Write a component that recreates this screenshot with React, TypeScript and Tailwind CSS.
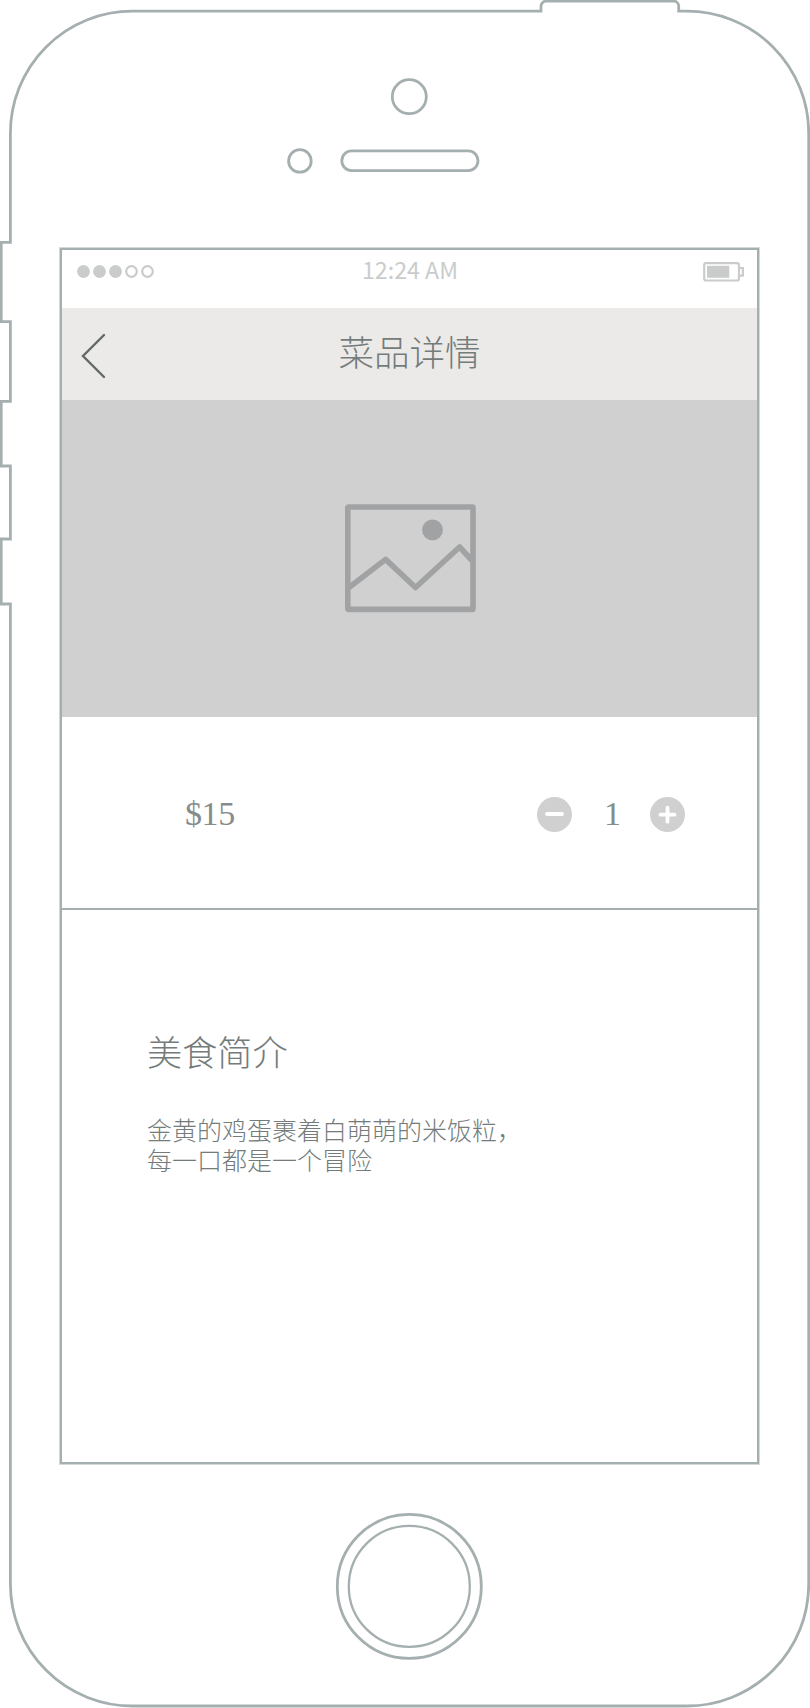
import type { ReactNode } from "react";

const OUTLINE =
  "M541 12.4V6.2a5 5 0 0 1 5-5H673.7a5 5 0 0 1 5 5V11.2H686.7A122 122 0 0 1 808.7 133.2V1584A122 122 0 0 1 686.7 1706H132.5A122 122 0 0 1 10.4 1584V604H1.2V539H10.4V466H1.2V401.3H10.4V321.7H1.2V242.4H10.4V133.2A122 122 0 0 1 132.4 11.2H542.2";

function DeviceOutline() {
  return (
    <svg
      className="pointer-events-none absolute inset-0"
      width="810"
      height="1708"
      viewBox="0 0 810 1708"
      fill="none"
      stroke="#a5afb0"
      strokeWidth="2.8"
      aria-hidden="true"
    >
      <path d={OUTLINE} />
      <circle cx="409.3" cy="96.7" r="17" />
      <circle cx="299.9" cy="160.9" r="11.3" />
      <rect x="341.8" y="150.9" width="136.2" height="19.8" rx="9.9" />
      <circle cx="409.3" cy="1586.4" r="72" />
      <circle cx="409.3" cy="1586.4" r="60.5" strokeWidth="2.3" />
    </svg>
  );
}

function Signal() {
  return (
    <div className="flex gap-[3px]">
      {[true, true, true, false, false].map((on, i) => (
        <svg key={i} width="13" height="13" viewBox="0 0 13 13">
          <circle
            cx="6.5"
            cy="6.5"
            r={on ? 6.4 : 5.3}
            fill={on ? "#cacccb" : "none"}
            stroke={on ? "none" : "#cacccb"}
            strokeWidth="2.2"
          />
        </svg>
      ))}
    </div>
  );
}

function Battery() {
  return (
    <svg width="42" height="20" viewBox="0 0 42 20" fill="none" stroke="#cacccb" strokeWidth="2.2">
      <rect x="1.2" y="1.1" width="34.8" height="17.4" rx="2" />
      <rect x="4" y="3.8" width="22.3" height="12" fill="#cacccb" stroke="none" />
      <path d="M37 6H39.9V13.6H37" />
    </svg>
  );
}

function StatusBar() {
  return (
    <div className="grid h-[58px] grid-cols-3 items-start pl-[15px] pr-[12px]">
      <div className="pt-[15px]">
        <Signal />
      </div>
      <div className="pr-[2px] pt-[2px] text-center text-[23.2px] leading-[34px] text-[#cacccc]">
        12:24 AM
      </div>
      <div className="flex justify-end pt-[12px]">
        <Battery />
      </div>
    </div>
  );
}

function Header() {
  return (
    <header className="grid h-[92px] grid-cols-[100px_1fr_100px] bg-[#ebeae8]">
      <button className="flex items-start pl-[19px] pt-[25px]" aria-label="返回">
        <svg width="26" height="46" viewBox="0 0 26 46" fill="none" stroke="#656868" strokeWidth="2.4" strokeLinecap="round">
          <path d="M23 2L2 23L23 44" />
        </svg>
      </button>
      <h1 className="pt-[18px] text-center text-[35.5px] leading-[50px] font-light text-[#747c7b]">
        菜品详情
      </h1>
    </header>
  );
}

function Photo() {
  return (
    <div className="flex h-[317px] justify-center bg-[#d0d0d0] pl-[2px] pt-[104px]">
      <svg width="131" height="109" viewBox="0 0 131 109" fill="none" stroke="#a1a2a3" strokeWidth="5.6">
        <rect x="2.8" y="3" width="125.2" height="102.4" rx="0.6" />
        <path d="M4 83.5L40.6 55.4L70.5 83.5L114.6 43L127 56.5" strokeLinejoin="round" />
        <circle cx="87.5" cy="25.9" r="10.4" fill="#a1a2a3" stroke="none" />
      </svg>
    </div>
  );
}

function StepButton({ label, children }: { label: string; children: ReactNode }) {
  return (
    <button aria-label={label} className="size-[35px]">
      <svg width="35" height="35" viewBox="0 0 35 35" fill="none" stroke="#fff" strokeWidth="3.8" strokeLinecap="round">
        <circle cx="17.5" cy="17.5" r="17.5" fill="#d0d0d0" stroke="none" />
        {children}
      </svg>
    </button>
  );
}

const SERIF = "font-['Liberation_Serif','Noto_Sans_CJK_SC',serif]";

function PriceRow() {
  return (
    <div className="flex h-[193px] items-start justify-between border-b-2 border-[#a5afb0] pl-[123px] pr-[72px] pt-[80px]">
      <span className={`${SERIF} text-[34px] leading-[34px] tracking-[-0.4px] text-[#858c8b]`}>$15</span>
      <div className="flex items-start">
        <StepButton label="减少">
          <path d="M10 17H25" />
        </StepButton>
        <span className={`${SERIF} w-[78px] pl-[3px] text-center text-[34px] leading-[34px] text-[#858c8b]`}>1</span>
        <StepButton label="增加">
          <path d="M10.5 17.7H24.5M17.5 10.7V24.7" />
        </StepButton>
      </div>
    </div>
  );
}

function Intro() {
  return (
    <section className="pl-[85px] pt-[116px] font-light text-[#747c7b]">
      <h2 className="text-[35.2px] leading-[50px]">美食简介</h2>
      <p className="pt-[40px] font-['Liberation_Sans','Noto_Sans_CJK_SC',sans-serif] text-[25px] leading-[30px]">
        金黄的鸡蛋裹着白萌萌的米饭粒，
        <br />
        每一口都是一个冒险
      </p>
    </section>
  );
}

export default function App() {
  return (
    <div className="relative h-[1708px] w-[810px] overflow-hidden bg-white pl-[60px] pt-[248px] font-['Noto_Sans_CJK_SC',sans-serif]">
      <DeviceOutline />
      <main className="h-[1216px] w-[699px] border-2 border-[#a5afb0] shadow-[0_0_0_1px_#d3dad9]">
        <StatusBar />
        <Header />
        <Photo />
        <PriceRow />
        <Intro />
      </main>
    </div>
  );
}
